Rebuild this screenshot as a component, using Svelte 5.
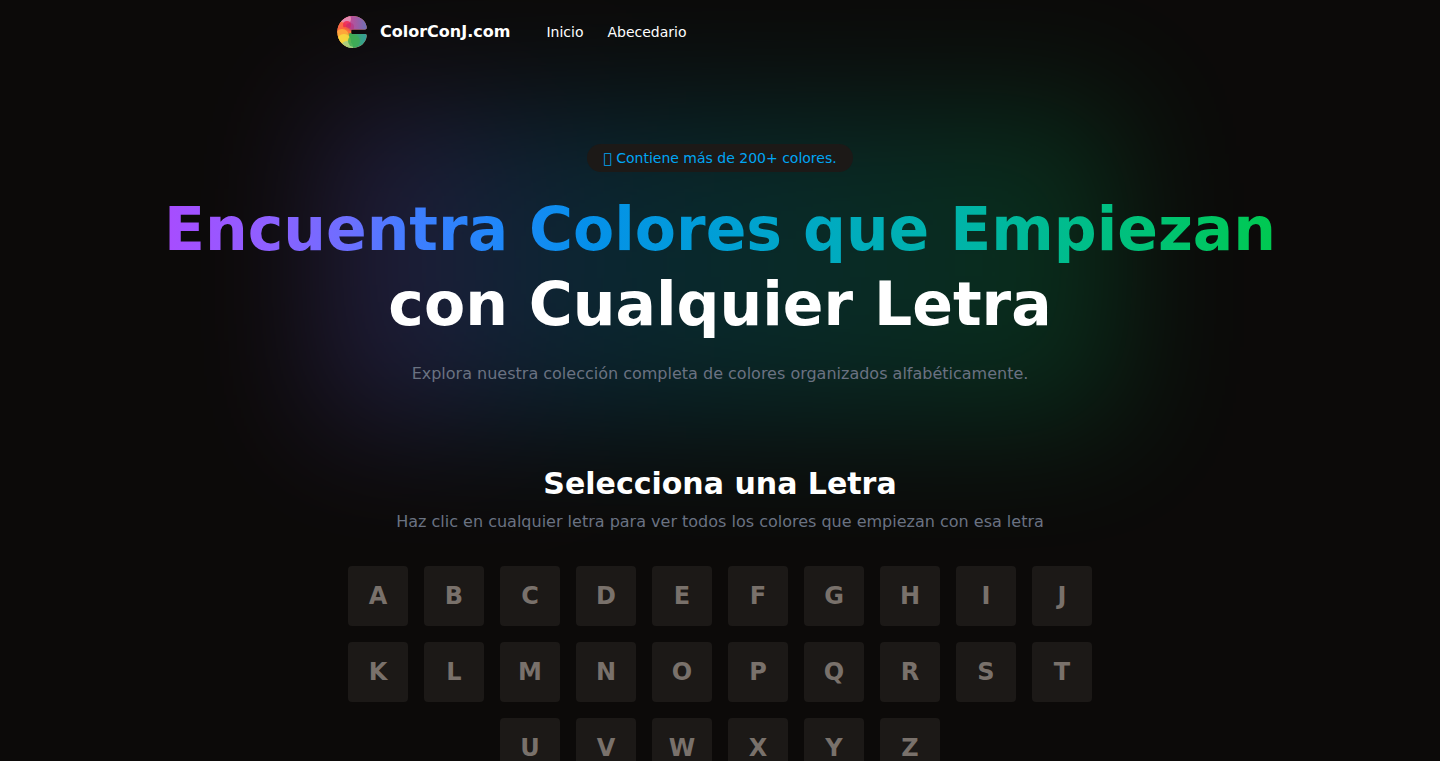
<script>
  const links = [
    { label: 'Inicio', href: '#inicio' },
    { label: 'Abecedario', href: '#abecedario' },
  ];

  const letters = 'ABCDEFGHIJKLMNOPQRSTUVWXYZ'.split('');
</script>

<div class="page" id="inicio">
  <header>
    <a class="brand" href="#inicio">
      <svg viewBox="0 0 32 32" aria-hidden="true">
        <defs>
          <clipPath id="c-shape">
            <path d="M16.500 0A15.200 16 0 1 0 16.500 32C24 32 30 27 30.700 20Q31 18 29 18H15.300V13.500H29Q31 13.500 30.700 11C29.500 4 24 0 16.500 0Z" />
          </clipPath>
          <linearGradient id="pink" x1="0" x2="1">
            <stop offset="0.3" stop-color="#d8438f" />
            <stop offset="1" stop-color="#6674b9" />
          </linearGradient>
          <linearGradient id="green" x1="0" x2="1">
            <stop offset="0.2" stop-color="#42ad50" />
            <stop offset="1" stop-color="#329ca5" />
          </linearGradient>
        </defs>
        <g clip-path="url(#c-shape)">
          <rect width="32" height="32" fill="#f8803e" />
          <path d="M0 0h32v14H15L8 6Z" fill="url(#pink)" />
          <path d="M10 17h22v15H10Z" fill="url(#green)" />
          <circle cx="9" cy="3" r="6" fill="#ea9ab8" opacity="0.8" />
          <circle cx="5" cy="12" r="6" fill="#fa6845" />
          <circle cx="11" cy="9" r="4" fill="#ef2853" opacity="0.85" />
          <circle cx="14" cy="11" r="4" fill="#b52d7c" opacity="0.5" />
          <circle cx="9" cy="16" r="5" fill="#fb6f35" opacity="0.7" />
          <circle cx="6" cy="20" r="7" fill="#ffb43b" opacity="0.8" />
          <circle cx="8" cy="25" r="7" fill="#f5df3f" opacity="0.8" />
          <circle cx="11" cy="31" r="6" fill="#a8ce82" opacity="0.9" />
          <circle cx="18" cy="25" r="6" fill="#3fac52" opacity="0.8" />
        </g>
      </svg>
      <span>ColorConJ.com</span>
    </a>
    <nav>
      {#each links as link}
        <a href={link.href}>{link.label}</a>
      {/each}
    </nav>
  </header>

  <main>
    <section class="hero">
      <div class="glow"></div>
      <p class="badge">&#xE000; Contiene más de 200+ colores.</p>
      <h1><span>Encuentra Colores que Empiezan</span><br />con Cualquier Letra</h1>
      <p class="lead">Explora nuestra colección completa de colores organizados alfabéticamente.</p>
    </section>

    <section class="alphabet" id="abecedario">
      <h2>Selecciona una Letra</h2>
      <p>Haz clic en cualquier letra para ver todos los colores que empiezan con esa letra</p>
      <div class="letters">
        {#each letters as letter (letter)}
          <a href="#letra-{letter}">{letter}</a>
        {/each}
      </div>
    </section>
  </main>
</div>

<style>
  :global(body) {
    background: #0c0a09;
    overflow: hidden;
  }
  .page {
    height: 100vh;
    overflow: hidden;
    color: #fff;
    font-family: 'DejaVu Sans', sans-serif;
    font-size: 16px;
    line-height: 24px;
  }
  a {
    color: inherit;
    text-decoration: none;
  }
  h1,
  h2,
  p {
    margin: 0;
  }
  header {
    position: relative;
    z-index: 1;
    display: flex;
    align-items: center;
    gap: 36px;
    max-width: 768px;
    height: 64px;
    margin: 0 auto;
  }
  .brand {
    display: flex;
    align-items: center;
    gap: 12px;
    font-weight: 700;
  }
  .brand svg {
    width: 32px;
    height: 32px;
  }
  nav {
    display: flex;
    gap: 24px;
    font-size: 14px;
    line-height: 20px;
  }
  .hero {
    position: relative;
    display: flex;
    flex-direction: column;
    align-items: center;
    padding: 80px 16px;
    text-align: center;
  }
  .glow {
    position: absolute;
    z-index: -1;
    top: 40px;
    bottom: 40px;
    left: 50%;
    width: 800px;
    transform: translateX(-50%);
    background: linear-gradient(to right, #8e5cff, #5f6cf4 12%, #2386e6 24%, #0099c8 38%, #00a8ab 54%, #00ae90 70%, #00b470 86%, #00ba54);
    filter: blur(64px);
    opacity: 0.2;
  }
  .badge {
    padding: 4px 16px;
    border-radius: 14px;
    background: #1c1917;
    color: #00a6f4;
    font-size: 14px;
    line-height: 20px;
  }
  h1 {
    margin: 20px 0;
    font-size: 60px;
    line-height: 75px;
  }
  h1 span {
    background: linear-gradient(to right, #a84cff, #8f5fff 9%, #6a70ff 17%, #417dff 22%, #2386fa 29%, #0590ea 38%, #009fd5 50%, #00abc0 60%, #00b5a5 73%, #00bf85 84%, #00c950);
    background-clip: text;
    color: transparent;
  }
  .lead,
  .alphabet p {
    color: #6a7282;
  }
  .alphabet {
    display: flex;
    flex-direction: column;
    align-items: center;
    text-align: center;
  }
  h2 {
    margin-bottom: 8px;
    font-size: 30px;
    line-height: 36px;
  }
  .letters {
    display: flex;
    flex-wrap: wrap;
    justify-content: center;
    gap: 16px;
    max-width: 768px;
    margin-top: 32px;
  }
  .letters a {
    display: flex;
    align-items: center;
    justify-content: center;
    width: 60px;
    height: 60px;
    border-radius: 4px;
    background: #1c1917;
    color: #79716b;
    font-size: 24px;
    font-weight: 700;
    line-height: 32px;
  }
  .letters a:hover {
    color: #fff;
  }
</style>
